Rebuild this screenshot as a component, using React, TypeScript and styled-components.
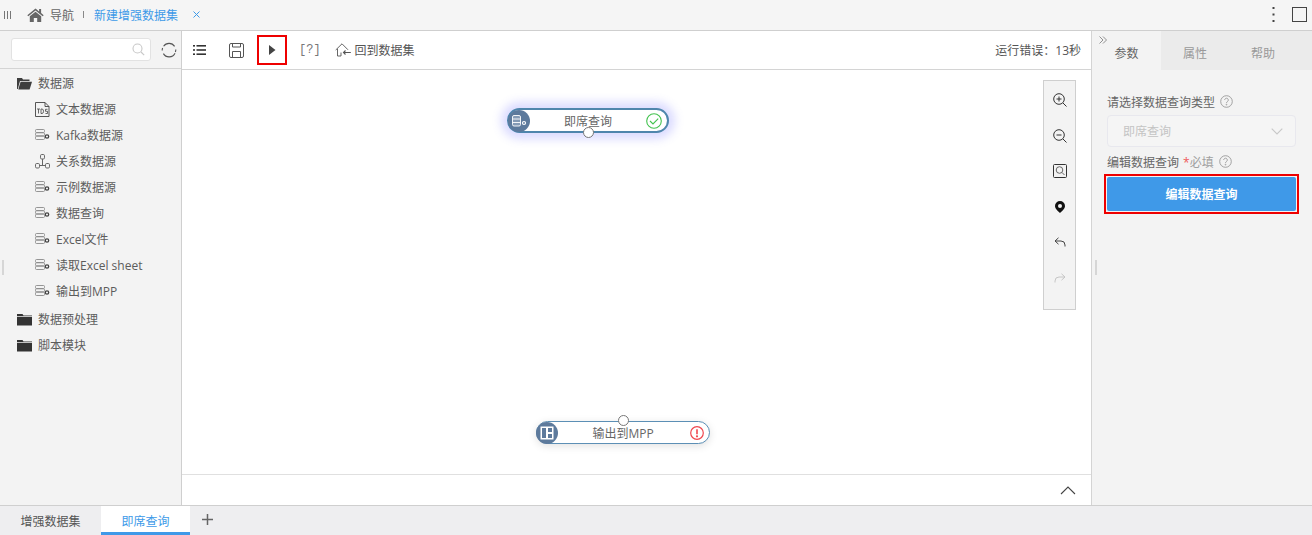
import React from "react";
import styled, { createGlobalStyle } from "styled-components";

const GlobalStyle = createGlobalStyle`
  html, body {
    margin: 0;
    padding: 0;
    background: #f3f3f3;
  }
  * {
    box-sizing: border-box;
  }
  body {
    font-family: "Open Sans", "Noto Sans CJK SC", sans-serif;
    font-size: 12px;
    color: #555;
    overflow: hidden;
  }
`;

const Page = styled.div`
  width: 1312px;
  height: 535px;
  display: flex;
  flex-direction: column;
  overflow: hidden;
`;

const TopBar = styled.header`
  height: 31px;
  flex: none;
  display: flex;
  align-items: center;
  padding: 0 0 1px 4px;
  background: #f5f5f5;
  border-bottom: 1px solid #cfcfcf;
`;

const Grip = styled.span`
  display: flex;
  gap: 2px;
  width: 23px;
  i {
    display: block;
    width: 1px;
    height: 8px;
    background: #777;
  }
`;

const NavLabel = styled.span`
  margin-left: 6px;
  color: #666;
  font-size: 12px;
`;

const Divider = styled.span`
  width: 1px;
  height: 7px;
  background: #888;
  margin: 0 10px 0 9px;
`;

const OpenTab = styled.span`
  color: #3d9ae8;
  font-size: 12px;
`;

const CloseMark = styled.span`
  display: flex;
  margin-left: 15px;
  color: #3d9ae8;
`;

const TopActions = styled.div`
  margin-left: auto;
  display: flex;
  align-items: center;
  gap: 17px;
  padding-right: 5px;
`;

const Body = styled.div`
  flex: 1;
  min-height: 0;
  display: flex;
`;

const Sidebar = styled.aside`
  position: relative;
  width: 182px;
  flex: none;
  background: #f3f3f3;
  border-right: 1px solid #cfcfcf;
`;

const SearchRow = styled.div`
  height: 38px;
  display: flex;
  align-items: center;
  padding-left: 11px;
  border-bottom: 1px solid #d4d4d4;
`;

const SearchBox = styled.div`
  width: 140px;
  height: 23px;
  display: flex;
  align-items: center;
  justify-content: flex-end;
  padding-right: 5px;
  background: #fff;
  border: 1px solid #e2e2e2;
  border-radius: 3px;
`;

const Refresh = styled.span`
  display: flex;
  margin-left: 10px;
`;

const Tree = styled.ul`
  list-style: none;
  margin: 0;
  padding: 1px 0 0;
`;

const FolderRow = styled.li`
  height: 26px;
  display: flex;
  align-items: center;
  gap: 6px;
  padding-left: 17px;
  font-size: 12px;
  color: #5c5c5c;
`;

const LeafRow = styled.li<{ $last?: boolean }>`
  height: 26px;
  display: flex;
  align-items: center;
  gap: 6px;
  padding-left: 35px;
  margin-bottom: ${({ $last }) => ($last ? "2px" : "0")};
  font-size: 12px;
  color: #5c5c5c;
`;

const ResizeMark = styled.span<{ $left: number; $top: number }>`
  position: absolute;
  left: ${({ $left }) => $left}px;
  top: ${({ $top }) => $top}px;
  width: 2px;
  height: 15px;
  background: #d6d6d6;
`;

const Center = styled.main`
  flex: 1;
  min-width: 0;
  display: flex;
  flex-direction: column;
  background: #fff;
`;

const Toolbar = styled.div`
  height: 39px;
  flex: none;
  display: flex;
  align-items: center;
  padding-left: 11px;
  border-bottom: 1px solid #d4d4d4;
`;

const ToolButton = styled.span<{ $width: number; $boxed?: boolean }>`
  display: flex;
  align-items: center;
  justify-content: center;
  width: ${({ $width }) => $width}px;
  height: 30px;
  margin-left: ${({ $boxed }) => ($boxed ? "-9px" : "0")};
  border: ${({ $boxed }) => ($boxed ? "2px solid #ee0000" : "none")};
`;

const Bracket = styled.span`
  font-family: "Liberation Mono", monospace;
  font-size: 12px;
  color: #777;
  margin-left: 12px;
`;

const BackLink = styled.span`
  display: flex;
  align-items: center;
  gap: 4px;
  margin-left: 14px;
  color: #555;
`;

const RunTime = styled.span`
  margin-left: auto;
  padding-right: 10px;
  color: #555;
`;

const Canvas = styled.div`
  position: relative;
  flex: 1;
  min-height: 0;
  background: #fff;
`;

const Node = styled.div<{ $left: number; $top: number; $width: number; $height: number; $active?: boolean }>`
  position: absolute;
  left: ${({ $left }) => $left}px;
  top: ${({ $top }) => $top}px;
  width: ${({ $width }) => $width}px;
  height: ${({ $height }) => $height}px;
  display: flex;
  align-items: center;
  background: #fff;
  border-radius: 13px;
  border: ${({ $active }) => ($active ? "2px solid #4f86ad" : "1px solid #5c8fb5")};
  box-shadow: ${({ $active }) =>
    $active ? "0 0 10px 6px rgba(215, 215, 255, 0.9)" : "0 2px 8px rgba(0, 0, 0, 0.12)"};
`;

const NodeBadge = styled.span`
  width: 22px;
  height: 22px;
  flex: none;
  margin-left: -1px;
  display: flex;
  align-items: center;
  justify-content: center;
  border-radius: 50%;
  background: #5d7a9c;
`;

const NodeTitle = styled.span<{ $nudge?: number }>`
  flex: 1;
  text-align: center;
  color: #666;
  font-size: 12px;
  white-space: nowrap;
  padding-right: ${({ $nudge }) => $nudge ?? 0}px;
`;

const NodeStatus = styled.span`
  display: flex;
  margin-right: 5px;
`;

const Port = styled.span<{ $side: "top" | "bottom" }>`
  position: absolute;
  left: 50%;
  ${({ $side }) => ($side === "top" ? "top: -7px;" : "bottom: -7px;")}
  width: 11px;
  height: 11px;
  margin-left: -5px;
  border-radius: 50%;
  background: #fff;
  border: 1px solid #777;
`;

const ZoomPalette = styled.div`
  position: absolute;
  right: 15px;
  top: 10px;
  width: 33px;
  height: 230px;
  display: flex;
  flex-direction: column;
  align-items: center;
  padding-top: 10px;
  gap: 17.6px;
  background: #f3f3f3;
  border: 1px solid #cfcfcf;
`;

const PaletteIcon = styled.span`
  display: flex;
  width: 18px;
  height: 18px;
  align-items: center;
  justify-content: center;
`;

const CollapseStrip = styled.div`
  height: 31px;
  flex: none;
  display: flex;
  align-items: center;
  justify-content: flex-end;
  padding-right: 15px;
  background: #fff;
  border-top: 1px solid #e0e0e0;
`;

const RightPanel = styled.aside`
  position: relative;
  width: 221px;
  flex: none;
  display: flex;
  flex-direction: column;
  background: #f3f3f3;
  border-left: 1px solid #d4d4d4;
`;

const TabRow = styled.div`
  display: flex;
  height: 39px;
  flex: none;
  background: #ebebeb;
`;

const SideTab = styled.span<{ $active?: boolean }>`
  position: relative;
  width: ${({ $active }) => ($active ? "69px" : "68px")};
  display: flex;
  align-items: center;
  justify-content: center;
  padding-top: 4px;
  font-size: 12px;
  color: ${({ $active }) => ($active ? "#666" : "#999")};
  background: ${({ $active }) => ($active ? "#f3f3f3" : "#ebebeb")};
  box-shadow: ${({ $active }) => ($active ? "1px 0 0 #dcdcdc" : "none")};
`;

const ExpandMark = styled.span`
  position: absolute;
  left: 7px;
  top: 5px;
  display: flex;
`;

const Form = styled.div`
  display: flex;
  flex-direction: column;
  padding: 23px 12px 0 15px;
`;

const FieldLabel = styled.div<{ $gap: number }>`
  display: flex;
  align-items: center;
  gap: 5px;
  height: 17px;
  margin-bottom: ${({ $gap }) => $gap}px;
  font-size: 12px;
  color: #666;
`;

const Required = styled.span`
  color: #a0a0a0;
  margin-left: -1px;
  b {
    color: #ef5a5a;
    font-weight: 400;
  }
`;

const FakeSelect = styled.div`
  width: 189px;
  height: 32px;
  display: flex;
  align-items: center;
  justify-content: space-between;
  padding: 0 12px 0 15px;
  margin-bottom: 6px;
  color: #c4c4c4;
  background: #f5f5f5;
  border: 1px solid #e8e8ee;
  border-radius: 4px;
`;

const ButtonFrame = styled.div`
  width: 195px;
  height: 40px;
  margin-left: -3px;
  padding: 1px;
  border: 2px solid #ee0000;
`;

const EditButton = styled.button`
  width: 100%;
  height: 100%;
  padding: 0;
  font-family: inherit;
  font-size: 12px;
  font-weight: 700;
  color: #fff;
  background: #3f99e8;
  border: none;
  border-radius: 2px;
`;

const BottomTabs = styled.footer`
  height: 30px;
  flex: none;
  display: flex;
  align-items: center;
  background: #eeeef0;
  border-top: 1px solid #cfcfcf;
`;

const SheetTab = styled.span<{ $active?: boolean }>`
  height: 100%;
  width: ${({ $active }) => ($active ? "89px" : "101px")};
  display: flex;
  align-items: center;
  justify-content: center;
  padding-top: ${({ $active }) => ($active ? "3px" : "0")};
  font-size: 12px;
  color: ${({ $active }) => ($active ? "#3d9ae8" : "#555")};
  background: ${({ $active }) => ($active ? "#fff" : "transparent")};
  border-bottom: ${({ $active }) => ($active ? "3px solid #3f99e8" : "none")};
`;

const AddTab = styled.span`
  display: flex;
  margin-left: 12px;
  margin-top: -3px;
`;

const HomeIcon = () => (
  <svg width="17" height="14" viewBox="0 0 17 14">
    <path d="M8.5 0.5 0.3 7.2l1 1.1L8.5 2.5l7.2 5.8 1-1.1-2.6-2.1V1h-2v2.6L8.5.5z" fill="#666" />
    <path d="M2.8 8.3 8.5 3.8l5.7 4.5V14h-4V10H6.8v4h-4z" fill="#666" />
  </svg>
);

const SearchIcon = () => (
  <svg width="13" height="13" viewBox="0 0 13 13" fill="none" stroke="#c8c8c8" strokeWidth="1.1">
    <circle cx="5.5" cy="5.5" r="4.5" />
    <path d="M9 9l3.2 3.2" />
  </svg>
);

const RefreshIcon = () => (
  <svg width="16" height="16" viewBox="0 0 16 16" fill="none" stroke="#555" strokeWidth="1.1">
    <path d="M2.6 4.2A6.6 6.6 0 0 1 13.6 4.4" />
    <path d="M14 11.2A6.6 6.6 0 0 1 2.4 11.6" />
    <path d="M1.2 8.4A6.7 6.7 0 0 1 1.6 6" />
    <path d="M14.8 7.6A6.7 6.7 0 0 1 14.4 10" />
  </svg>
);

const OpenFolderIcon = () => (
  <svg width="15" height="13" viewBox="0 0 15 13">
    <path d="M0 1h5l1 1.5h6.5V4H3L0.8 12H0z" fill="#3d3d3d" />
    <path d="M3.6 4.8H15L12.6 12.5H1.3z" fill="#3d3d3d" />
  </svg>
);

const FolderIcon = () => (
  <svg width="15" height="13" viewBox="0 0 15 13">
    <path d="M0 1h5.5l1 1.5H15V3.3H0z" fill="#333" />
    <path d="M0 4h15v8.5H0z" fill="#333" />
  </svg>
);

const TextSourceIcon = () => (
  <svg width="15" height="15" viewBox="0 0 15 15" fill="none" stroke="#444" strokeWidth="0.9">
    <path d="M.5.5h9.500l4 4v10H.5z" />
    <path d="M10 .5v4h4" />
    <path d="M2 7h3M3.500 7v4.500M6 7v4.500h1a1.500 2.200 0 0 0 0-4.500zM12.500 7.300h-2v2h2v2.200h-2" strokeWidth="0.8" />
  </svg>
);

const DbGearIcon = () => (
  <svg width="15" height="12" viewBox="0 0 15 12" fill="none" stroke="#8a8a8a" strokeWidth="0.9">
    <rect x="0.500" y="0.500" width="9" height="3" rx="1" />
    <rect x="0.500" y="3.800" width="9" height="3" rx="1" />
    <rect x="0.500" y="7.200" width="9" height="3.300" rx="1" />
    <circle cx="12" cy="7.500" r="1.700" stroke="#444" strokeWidth="1.300" fill="#f3f3f3" />
  </svg>
);

const RelationIcon = () => (
  <svg width="15" height="15" viewBox="0 0 15 15" fill="none" stroke="#666" strokeWidth="1">
    <rect x="5.500" y="0.500" width="4" height="4.500" rx="1.200" />
    <rect x="0.500" y="9.500" width="4" height="4.500" rx="1.200" />
    <rect x="10.500" y="9.500" width="4" height="4.500" rx="1.200" />
    <path d="M7.500 5v6.500M4.500 11.500h6" />
  </svg>
);

const ListIcon = () => (
  <svg width="13" height="12" viewBox="0 0 13 12" fill="#333">
    <rect x="0" y="1" width="2" height="1.600" />
    <rect x="3.500" y="1" width="9.500" height="1.600" />
    <rect x="0" y="5.200" width="2" height="1.600" />
    <rect x="3.500" y="5.200" width="9.500" height="1.600" />
    <rect x="0" y="9.400" width="2" height="1.600" />
    <rect x="3.500" y="9.400" width="9.500" height="1.600" />
  </svg>
);

const SaveIcon = () => (
  <svg width="15" height="15" viewBox="0 0 15 15" fill="none" stroke="#555" strokeWidth="1">
    <path d="M.5 2A1.500 1.500 0 0 1 2 .5h11A1.500 1.500 0 0 1 14.500 2v11a1.500 1.500 0 0 1-1.500 1.500H2A1.500 1.500 0 0 1 .5 13z" />
    <path d="M3.500.5v3.500h8V.5M3.500 14.500V8.500h8v6" />
  </svg>
);

const PlayIcon = () => (
  <svg width="7" height="10" viewBox="0 0 7 10">
    <path d="M0 0l6.500 5L0 10z" fill="#444" />
  </svg>
);

const BackHomeIcon = () => (
  <svg width="16" height="14" viewBox="0 0 16 14" fill="none" stroke="#555" strokeWidth="0.9">
    <path d="M.7 7 7 .8 13 6.800" />
    <path d="M2.500 5.800V13H6V9.500" />
    <path d="M15.800 9.500H8.500M10.500 7.500l-2 2 2 2" strokeWidth="1.100" />
  </svg>
);

const CollapseIcon = () => (
  <svg width="16" height="9" viewBox="0 0 16 9" fill="none" stroke="#444" strokeWidth="1.100">
    <path d="M1 8l7-7 7 7" />
  </svg>
);

const ZoomInIcon = ({ minus }: { minus?: boolean }) => (
  <svg width="14" height="14" viewBox="0 0 14 14" fill="none" stroke="#333" strokeWidth="1">
    <circle cx="6" cy="6" r="5.300" />
    <path d="M10 10l3.500 3.500M3.500 6h5" />
    {!minus && <path d="M6 3.500v5" />}
  </svg>
);

const FitIcon = () => (
  <svg width="14" height="14" viewBox="0 0 14 14" fill="none" stroke="#333" strokeWidth="1">
    <rect x="0.500" y="0.500" width="13" height="13" rx="1" />
    <circle cx="6.500" cy="6" r="3.300" stroke="#666" />
    <path d="M9 8.500l2.500 2.500" stroke="#666" />
  </svg>
);

const PinIcon = () => (
  <svg width="10" height="12" viewBox="0 0 10 12">
    <path d="M5 0a5 5 0 0 1 5 5c0 2.800-3 5-5 7-2-2-5-4.200-5-7a5 5 0 0 1 5-5z" fill="#111" />
    <circle cx="5" cy="5" r="2" fill="#f3f3f3" />
  </svg>
);

const UndoIcon = ({ off }: { off?: boolean }) => (
  <svg
    width="12"
    height="10"
    viewBox="0 0 12 10"
    fill="none"
    stroke={off ? "#c6c6c6" : "#444"}
    strokeWidth="1"
    transform={off ? "scale(-1 1)" : undefined}
  >
    <path d="M4.500.8 1 4l3.500 3.200" />
    <path d="M1 4h6a4 4 0 0 1 4 4v1.500" />
  </svg>
);

const HelpIcon = () => (
  <svg width="13" height="13" viewBox="0 0 13 13" fill="none" stroke="#999" strokeWidth="0.9">
    <circle cx="6.500" cy="6.500" r="5.800" />
    <path d="M4.700 5a1.800 1.800 0 1 1 2.800 1.500c-.7.500-1 .8-1 1.600" />
    <circle cx="6.500" cy="9.700" r="0.400" />
  </svg>
);

const ChevronDown = () => (
  <svg width="12" height="7" viewBox="0 0 12 7" fill="none" stroke="#c8c8c8" strokeWidth="1.100">
    <path d="M.7.7 6 6l5.300-5.300" />
  </svg>
);

const BadgeDb = () => (
  <svg width="15" height="12" viewBox="0 0 15 12" fill="none" stroke="#fff" strokeWidth="0.9">
    <rect x="0.500" y="0.500" width="8" height="10.500" rx="1.500" fill="rgba(255,255,255,0.25)" />
    <path d="M.5 4h8M.5 7.500h8" />
    <circle cx="12" cy="8" r="1.500" strokeWidth="1.200" />
  </svg>
);

const BadgeLayout = () => (
  <svg width="14" height="14" viewBox="0 0 14 14">
    <path d="M.5.500h13v13H.5z" fill="#fff" />
    <path d="M2 2h4v10H2zM8 2h4v4H8zM8 8h4v4H8z" fill="#5d7a9c" />
  </svg>
);

const OkIcon = () => (
  <svg width="16" height="16" viewBox="0 0 16 16" fill="none" stroke="#43c24f" strokeWidth="1.100">
    <circle cx="8" cy="8" r="7.300" />
    <path d="M4 8l3 3 5.200-5.400" />
  </svg>
);

const ErrorIcon = () => (
  <svg width="14" height="14" viewBox="0 0 14 14" fill="none" stroke="#f0474f" strokeWidth="1.200">
    <circle cx="7" cy="7" r="6.300" />
    <path d="M7 3.200v5" strokeWidth="1.600" />
    <circle cx="7" cy="10.300" r="0.500" />
  </svg>
);

const ExpandIcon = () => (
  <svg width="8" height="9" viewBox="0 0 8 9" fill="none" stroke="#777" strokeWidth="0.800">
    <path d="M.5.500l3.500 3.500-3.500 3.500M4 .500l3.500 3.500L4 7.500" />
  </svg>
);

const leaves: { label: string; icon: React.ReactNode }[] = [
  { label: "文本数据源", icon: <TextSourceIcon /> },
  { label: "Kafka数据源", icon: <DbGearIcon /> },
  { label: "关系数据源", icon: <RelationIcon /> },
  { label: "示例数据源", icon: <DbGearIcon /> },
  { label: "数据查询", icon: <DbGearIcon /> },
  { label: "Excel文件", icon: <DbGearIcon /> },
  { label: "读取Excel sheet", icon: <DbGearIcon /> },
  { label: "输出到MPP", icon: <DbGearIcon /> },
];

export default function App() {
  return (
    <Page>
      <GlobalStyle />
      <TopBar>
        <Grip>
          <i />
          <i />
          <i />
        </Grip>
        <HomeIcon />
        <NavLabel>导航</NavLabel>
        <Divider />
        <OpenTab>新建增强数据集</OpenTab>
        <CloseMark>
          <svg width="7" height="7" viewBox="0 0 7 7" stroke="#3d9ae8" strokeWidth="1">
            <path d="M.5.500l6 6M6.500.500l-6 6" />
          </svg>
        </CloseMark>
        <TopActions>
          <svg width="3" height="15" viewBox="0 0 3 15" fill="#444">
            <rect x="0.500" y="0" width="2" height="2" />
            <rect x="0.500" y="6.500" width="2" height="2" />
            <rect x="0.500" y="13" width="2" height="2" />
          </svg>
          <svg width="15" height="15" viewBox="0 0 15 15" fill="none" stroke="#444" strokeWidth="1">
            <rect x="0.500" y="0.500" width="14" height="14" />
          </svg>
        </TopActions>
      </TopBar>

      <Body>
        <Sidebar>
          <SearchRow>
            <SearchBox>
              <SearchIcon />
            </SearchBox>
            <Refresh>
              <RefreshIcon />
            </Refresh>
          </SearchRow>
          <Tree>
            <FolderRow>
              <OpenFolderIcon />
              数据源
            </FolderRow>
            {leaves.map((leaf, i) => (
              <LeafRow key={leaf.label} $last={i === leaves.length - 1}>
                {leaf.icon}
                {leaf.label}
              </LeafRow>
            ))}
            <FolderRow>
              <FolderIcon />
              数据预处理
            </FolderRow>
            <FolderRow>
              <FolderIcon />
              脚本模块
            </FolderRow>
          </Tree>
          <ResizeMark $left={2} $top={229} />
        </Sidebar>

        <Center>
          <Toolbar>
            <ToolButton $width={13}>
              <ListIcon />
            </ToolButton>
            <ToolButton $width={60}>
              <SaveIcon />
            </ToolButton>
            <ToolButton $width={30} $boxed>
              <PlayIcon />
            </ToolButton>
            <Bracket>[?]</Bracket>
            <BackLink>
              <BackHomeIcon />
              回到数据集
            </BackLink>
            <RunTime>运行错误：13秒</RunTime>
          </Toolbar>
          <Canvas>
            <Node $left={325} $top={38} $width={162} $height={25} $active>
              <NodeBadge>
                <BadgeDb />
              </NodeBadge>
              <NodeTitle>即席查询</NodeTitle>
              <NodeStatus>
                <OkIcon />
              </NodeStatus>
              <Port $side="bottom" />
            </Node>
            <Node $left={354} $top={351} $width={174} $height={23}>
              <NodeBadge>
                <BadgeLayout />
              </NodeBadge>
              <NodeTitle $nudge={2}>输出到MPP</NodeTitle>
              <NodeStatus>
                <ErrorIcon />
              </NodeStatus>
              <Port $side="top" />
            </Node>
            <ZoomPalette>
              <PaletteIcon>
                <ZoomInIcon />
              </PaletteIcon>
              <PaletteIcon>
                <ZoomInIcon minus />
              </PaletteIcon>
              <PaletteIcon>
                <FitIcon />
              </PaletteIcon>
              <PaletteIcon>
                <PinIcon />
              </PaletteIcon>
              <PaletteIcon>
                <UndoIcon />
              </PaletteIcon>
              <PaletteIcon>
                <UndoIcon off />
              </PaletteIcon>
            </ZoomPalette>
          </Canvas>
          <CollapseStrip>
            <CollapseIcon />
          </CollapseStrip>
        </Center>

        <RightPanel>
          <TabRow>
            <SideTab $active>
              <ExpandMark>
                <ExpandIcon />
              </ExpandMark>
              参数
            </SideTab>
            <SideTab>属性</SideTab>
            <SideTab>帮助</SideTab>
          </TabRow>
          <Form>
            <FieldLabel $gap={5}>
              请选择数据查询类型
              <HelpIcon />
            </FieldLabel>
            <FakeSelect>
              即席查询
              <ChevronDown />
            </FakeSelect>
            <FieldLabel $gap={4}>
              编辑数据查询
              <Required>
                <b>*</b>必填
              </Required>
              <HelpIcon />
            </FieldLabel>
            <ButtonFrame>
              <EditButton>编辑数据查询</EditButton>
            </ButtonFrame>
          </Form>
          <ResizeMark $left={3} $top={229} />
        </RightPanel>
      </Body>

      <BottomTabs>
        <SheetTab>增强数据集</SheetTab>
        <SheetTab $active>即席查询</SheetTab>
        <AddTab>
          <svg width="11" height="11" viewBox="0 0 11 11" stroke="#666" strokeWidth="1.500">
            <path d="M5.500 0v11M0 5.500h11" />
          </svg>
        </AddTab>
      </BottomTabs>
    </Page>
  );
}
